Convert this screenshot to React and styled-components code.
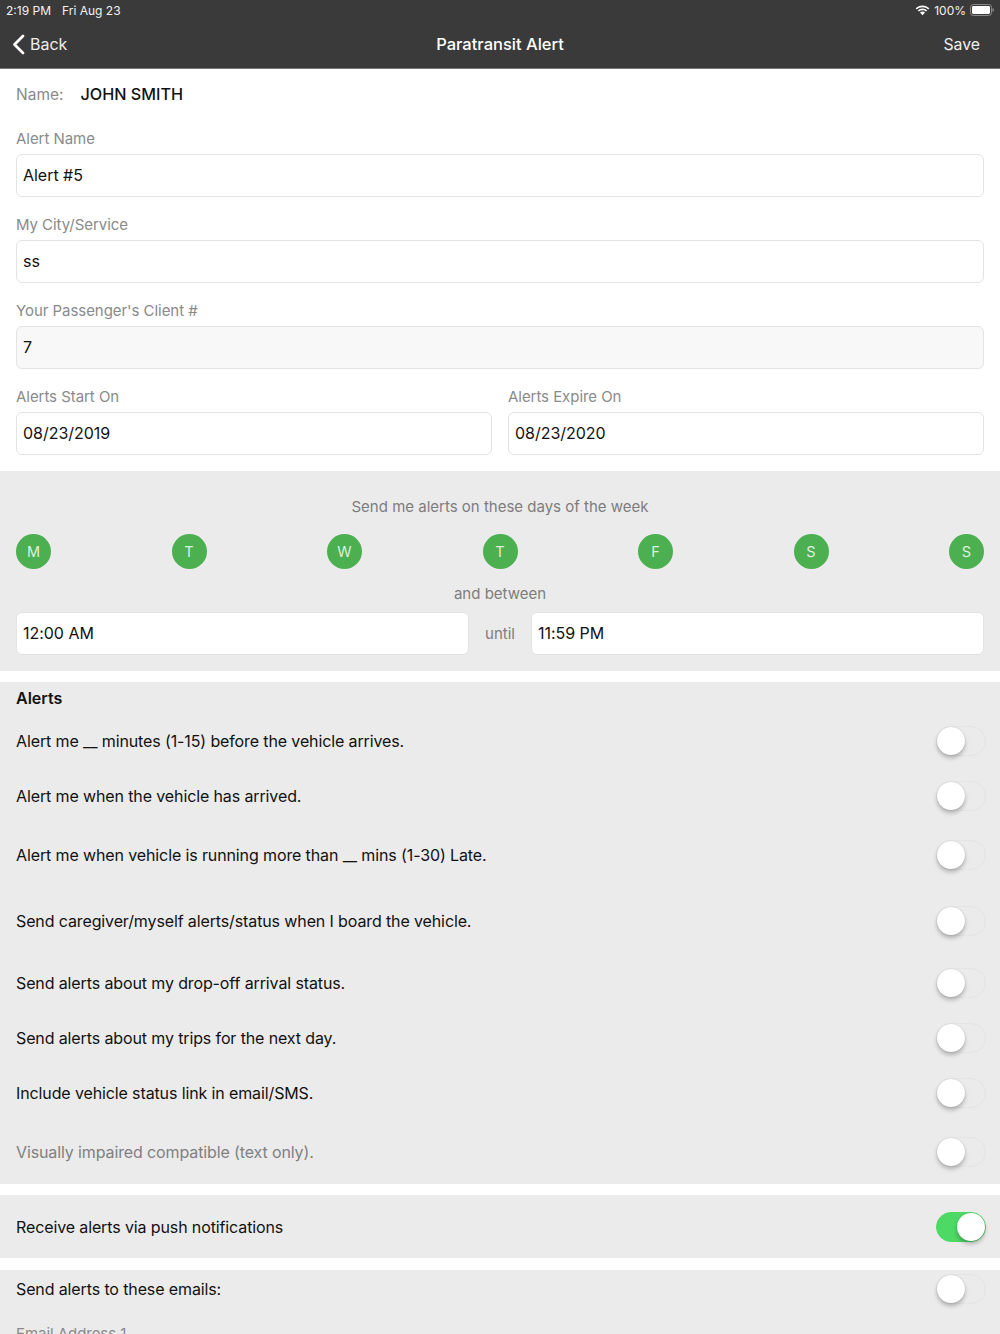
import React from "react";
import styled, { createGlobalStyle } from "styled-components";

const Global = createGlobalStyle`
  html, body { margin: 0; padding: 0; background: #fff; height: 1334px; overflow: hidden; }
  body { font-family: Inter, "Liberation Sans", sans-serif; -webkit-font-smoothing: antialiased; }
  * { box-sizing: border-box; }
`;

const Page = styled.div`
  width: 1000px;
  height: 1334px;
  overflow: hidden;
  display: flex;
  flex-direction: column;
  background: #fff;
`;

const Header = styled.header`
  height: 69px;
  flex: none;
  background: #3a3a3a;
  color: #fff;
  border-bottom: 1px solid #777;
  display: flex;
  flex-direction: column;
`;

const StatusBar = styled.div`
  height: 20px;
  padding: 0 6px 0 6px;
  display: flex;
  align-items: center;
  justify-content: space-between;
  font-size: 12px;
  color: #f2f2f2;
`;

const StatusGroup = styled.div`
  display: flex;
  align-items: center;
  gap: ${(p) => p.$gap || 4}px;
`;

const NavBar = styled.nav`
  flex: 1;
  padding: 0 20px 0 12px;
  display: flex;
  align-items: center;
  justify-content: space-between;
  position: relative;
  font-size: 16px;
`;

const NavBack = styled.div`
  display: flex;
  align-items: center;
  gap: 5px;
  color: #eee;
`;

const NavTitle = styled.div`
  position: absolute;
  left: 0;
  right: 0;
  top: 0;
  bottom: 0;
  display: flex;
  align-items: center;
  justify-content: center;
  font-weight: 500;
  font-size: 16.5px;
`;

const NavSave = styled.div`
  color: #eee;
  font-size: 15.8px;
`;

const WhiteForm = styled.section`
  padding: 13px 16px 16px;
  flex: none;
`;

const NameRow = styled.div`
  display: flex;
  align-items: center;
  height: 24px;
  gap: 17px;
  margin-bottom: 21px;
  font-size: 16px;
`;

const NameLabel = styled.span`
  color: #8a8a8a;
  font-size: 15.5px;
`;

const NameValue = styled.span`
  color: #111;
  font-weight: 500;
  font-size: 16.2px;
`;

const Field = styled.div`
  display: flex;
  flex-direction: column;
  flex: 1;
  margin-bottom: ${(p) => p.$mb ?? 16}px;
`;

const Label = styled.label`
  color: #8a8a8a;
  font-size: 15px;
  letter-spacing: -0.05px;
  line-height: 24px;
  height: 27px;
`;

const Input = styled.div`
  height: 43px;
  flex: none;
  border: 1px solid #e3e3e3;
  border-radius: 6px;
  background: ${(p) => (p.$muted ? "#f8f8f8" : "#fff")};
  padding: 0 6px 2px;
  display: flex;
  align-items: center;
  font-size: 16px;
  letter-spacing: -0.03px;
  color: #111;
`;

const DateRow = styled.div`
  display: flex;
  gap: 16px;
`;

const Band = styled.section`
  background: #ebebeb;
  flex: none;
  margin-bottom: ${(p) => p.$mb ?? 11}px;
  height: ${(p) => (p.$h ? `${p.$h}px` : "auto")};
`;

const ScheduleBand = styled(Band)`
  padding: 24px 16px 0;
`;

const CenterText = styled.div`
  text-align: center;
  color: #7d7d7d;
  font-size: 15px;
  line-height: 24px;
`;

const Days = styled.div`
  display: flex;
  justify-content: space-between;
  margin: 15px 0 13px;
`;

const Day = styled.div`
  width: 35px;
  height: 35px;
  border-radius: 50%;
  background: #4caf50;
  color: #dff0df;
  display: flex;
  align-items: center;
  justify-content: center;
  font-size: 14.5px;
`;

const TimeRow = styled.div`
  display: flex;
  align-items: center;
  gap: 16px;
  margin-top: 6px;
`;

const TimeInput = styled(Input)`
  flex: 1;
`;

const Until = styled.span`
  width: 30px;
  text-align: center;
  color: #7d7d7d;
  font-size: 15px;
`;

const AlertsTitle = styled.h2`
  margin: 0;
  padding: 0 16px;
  height: 32px;
  display: flex;
  align-items: center;
  font-size: 16px;
  font-weight: 600;
  color: #111;
`;

const Row = styled.div`
  height: ${(p) => p.$h}px;
  padding: 0 14px 0 16px;
  display: flex;
  align-items: center;
  justify-content: space-between;
  font-size: 16px;
  letter-spacing: -0.12px;
  color: ${(p) => (p.$muted ? "#808080" : "#111")};
`;

const Track = styled.div`
  width: 50px;
  height: 30px;
  border-radius: 15px;
  flex: none;
  position: relative;
  background: ${(p) => (p.$on ? "#4cd964" : "transparent")};
  border: 1px solid ${(p) => (p.$on ? "#4cd964" : "#e4e4e4")};
`;

const Knob = styled.div`
  position: absolute;
  top: 0;
  left: ${(p) => (p.$on ? "20px" : "0")};
  width: 28px;
  height: 28px;
  border-radius: 50%;
  background: #fff;
  box-shadow: 0 3px 4px rgba(0, 0, 0, 0.25), 0 0 1px rgba(0, 0, 0, 0.2);
`;

const EmailLabel = styled(Label)`
  display: block;
  padding: 0 16px;
  margin-top: 14px;
`;

const Switch = ({ on }) => (
  <Track $on={on}>
    <Knob $on={on} />
  </Track>
);

const alerts = [
  ["Alert me __ minutes (1-15) before the vehicle arrives.", 54],
  ["Alert me when the vehicle has arrived.", 55],
  ["Alert me when vehicle is running more than __ mins (1-30) Late.", 64],
  ["Send caregiver/myself alerts/status when I board the vehicle.", 68],
  ["Send alerts about my drop-off arrival status.", 56],
  ["Send alerts about my trips for the next day.", 54],
  ["Include vehicle status link in email/SMS.", 55],
  ["Visually impaired compatible (text only).", 64, true],
];

export default function App() {
  return (
    <Page>
      <Global />
      <Header>
        <StatusBar>
          <StatusGroup $gap={11}>
            <span>2:19 PM</span>
            <span>Fri Aug 23</span>
          </StatusGroup>
          <StatusGroup>
            <svg width="15" height="11" viewBox="0 0 15 11" fill="#fff">
              <path d="M7.5 2.2c2.2 0 4.2.9 5.7 2.3l1.1-1.2C12.5 1.5 10.1.4 7.5.4S2.5 1.5.7 3.3l1.1 1.2c1.5-1.4 3.5-2.3 5.700-2.300z" />
              <path d="M7.5 5.2c1.4 0 2.7.5 3.6 1.4l1.1-1.2C11 4.2 9.3 3.4 7.5 3.4s-3.5.8-4.7 2l1.1 1.2c.9-.9 2.2-1.4 3.6-1.4z" />
              <path d="M7.5 6.4c-1 0-1.8.4-2.5 1l2.5 2.8L10 7.4c-.7-.6-1.5-1-2.5-1z" />
            </svg>
            <span>100%</span>
            <svg width="24" height="12" viewBox="0 0 24 12">
              <rect x="0.5" y="0.5" width="21" height="11" rx="2.8" fill="none" stroke="#8a8a8a" />
              <rect x="2" y="2" width="18" height="8" rx="1.4" fill="#fff" />
              <path d="M22.500 4v4c.9-.2 1.500-1 1.500-2s-.6-1.800-1.500-2z" fill="#8a8a8a" />
            </svg>
          </StatusGroup>
        </StatusBar>
        <NavBar>
          <NavBack>
            <svg width="13" height="21" viewBox="0 0 13 21" fill="none" stroke="#fff" strokeWidth="2.8" strokeLinecap="round" strokeLinejoin="round">
              <path d="M11 2 L2.500 10.500 L11 19" />
            </svg>
            <span>Back</span>
          </NavBack>
          <NavTitle>Paratransit Alert</NavTitle>
          <NavSave>Save</NavSave>
        </NavBar>
      </Header>

      <WhiteForm>
        <NameRow>
          <NameLabel>Name:</NameLabel>
          <NameValue>JOHN SMITH</NameValue>
        </NameRow>
        <Field>
          <Label>Alert Name</Label>
          <Input>Alert #5</Input>
        </Field>
        <Field>
          <Label>My City/Service</Label>
          <Input>ss</Input>
        </Field>
        <Field>
          <Label>Your Passenger's Client #</Label>
          <Input $muted>7</Input>
        </Field>
        <DateRow>
          <Field $mb={0}>
            <Label>Alerts Start On</Label>
            <Input>08/23/2019</Input>
          </Field>
          <Field $mb={0}>
            <Label>Alerts Expire On</Label>
            <Input>08/23/2020</Input>
          </Field>
        </DateRow>
      </WhiteForm>

      <ScheduleBand $h={200}>
        <CenterText>Send me alerts on these days of the week</CenterText>
        <Days>
          {["M", "T", "W", "T", "F", "S", "S"].map((d, i) => (
            <Day key={i}>{d}</Day>
          ))}
        </Days>
        <CenterText>and between</CenterText>
        <TimeRow>
          <TimeInput>12:00 AM</TimeInput>
          <Until>until</Until>
          <TimeInput>11:59 PM</TimeInput>
        </TimeRow>
      </ScheduleBand>

      <Band $h={502}>
        <AlertsTitle>Alerts</AlertsTitle>
        {alerts.map(([text, h, muted]) => (
          <Row key={text} $h={h} $muted={muted}>
            <span>{text}</span>
            <Switch />
          </Row>
        ))}
      </Band>

      <Band $h={63} $mb={12}>
        <Row $h={63}>
          <span>Receive alerts via push notifications</span>
          <Switch on />
        </Row>
      </Band>

      <Band $h={70} $mb={0}>
        <Row $h={38}>
          <span>Send alerts to these emails:</span>
          <Switch />
        </Row>
        <EmailLabel>Email Address 1</EmailLabel>
      </Band>
    </Page>
  );
}
